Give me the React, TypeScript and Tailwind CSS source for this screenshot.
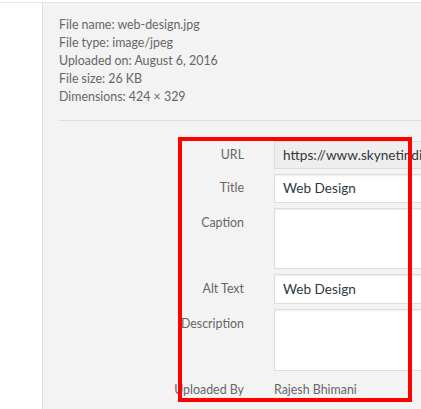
import React from 'react';

const details = [
    ['File name:', 'web-design.jpg'],
    ['File type:', 'image/jpeg'],
    ['Uploaded on:', 'August 6, 2016'],
    ['File size:', '26 KB'],
    ['Dimensions:', '424 × 329'],
];

function Row({ label, children, top = false }: { label: string; children: React.ReactNode; top?: boolean }) {
    return (
        <div className={`flex ${top ? 'items-start' : 'items-center'} gap-[30px]`}>
            <div className={`w-[185px] shrink-0 text-right text-[12.4px] text-[#666] ${top ? 'pt-[6px]' : ''}`}>{label}</div>
            {children}
        </div>
    );
}

export default function App() {
    const font = { fontFamily: '"Segoe UI", Lato, sans-serif' };
    return (
        <div className="relative w-[421px] h-[409px] overflow-hidden bg-white" style={font}>
            <div className="h-[3px] bg-white border-b border-[#e5e5e5]" />
            <div className="flex h-full">
                <div className="w-[43px] shrink-0 bg-white border-r border-[#ddd]" />
                <div className="flex-1 min-w-0 bg-[#f3f3f3] pl-4 pt-[13px]">
                    <div className="text-[12.4px] leading-[18px] text-[#666]">
                        {details.map(([k, v]) => (
                            <div key={k}>{k} {v}</div>
                        ))}
                    </div>
                    <div className="mt-[14px] h-px bg-[#ddd] w-[600px]" />
                    <div className="mt-[20px] flex flex-col gap-[5px]">
                        <Row label="URL">
                            <div className="h-[28px] w-[300px] shrink-0 bg-[#eee] border border-[#ddd] px-2 text-[13.6px] leading-[26px] text-[#32373c] whitespace-nowrap overflow-hidden">
                                https://www.skynetindia.info/wp-content/uploads/web-design.jpg
                            </div>
                        </Row>
                        <Row label="Title">
                            <div className="h-[29px] w-[300px] shrink-0 bg-white border border-[#ddd] shadow-[inset_0_1px_2px_rgba(0,0,0,0.07)] px-2 text-[13.6px] leading-[27px] text-[#32373c]">
                                Web Design
                            </div>
                        </Row>
                        <Row label="Caption" top>
                            <div className="h-[61px] w-[300px] shrink-0 bg-white border border-[#ddd] shadow-[inset_0_1px_2px_rgba(0,0,0,0.07)]" />
                        </Row>
                        <Row label="Alt Text">
                            <div className="h-[30px] w-[300px] shrink-0 bg-white border border-[#ddd] shadow-[inset_0_1px_2px_rgba(0,0,0,0.07)] px-2 text-[13.6px] leading-[28px] text-[#32373c]">
                                Web Design
                            </div>
                        </Row>
                        <Row label="Description" top>
                            <div className="h-[62px] w-[300px] shrink-0 bg-white border border-[#ddd] shadow-[inset_0_1px_2px_rgba(0,0,0,0.07)]" />
                        </Row>
                        <div className="mt-[5px] flex items-center gap-[30px] text-[12.4px] text-[#666]">
                            <div className="w-[185px] shrink-0 text-right">Uploaded By</div>
                            <div>Rajesh Bhimani</div>
                        </div>
                    </div>
                </div>
            </div>
            <div className="absolute left-[178px] top-[137px] w-[234px] h-[265px] border-4 border-[#ff0000] pointer-events-none" />
        </div>
    );
}
